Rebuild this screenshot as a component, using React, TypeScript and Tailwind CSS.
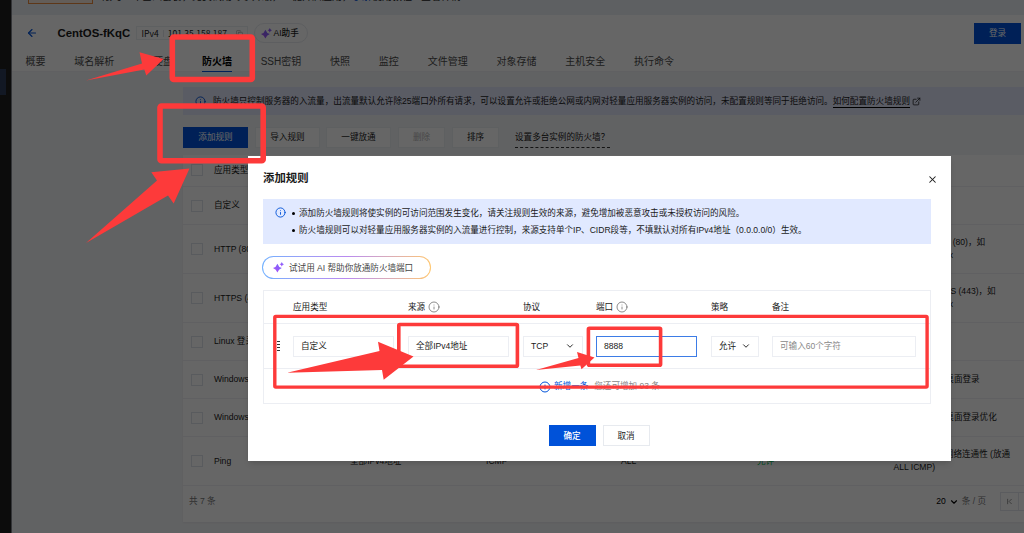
import { ArrowLeft, ChevronDown, ChevronFirst, Copy, ExternalLink, Info, PlusCircle, X } from 'lucide-react';

const TABS = [
  { label: '概要' },
  { label: '域名解析' },
  { label: '云硬盘' },
  { label: '防火墙', active: true },
  { label: 'SSH密钥' },
  { label: '快照' },
  { label: '监控' },
  { label: '文件管理' },
  { label: '对象存储' },
  { label: '主机安全' },
  { label: '执行命令' },
];

const RULES = [
  { type: '自定义', height: 'h-[38px]', remark: '' },
  { type: 'HTTP (80)', height: 'h-[49px]', remark: 'Web服务HTTP (80)\uff0c如 Apache、Nginx' },
  { type: 'HTTPS (443)', height: 'h-[49px]', remark: 'Web服务HTTPS (443)\uff0c如 Apache、Nginx' },
  { type: 'Linux 登录', height: 'h-[38px]', remark: '' },
  { type: 'Windows', height: 'h-[38px]', remark: 'Windows远程桌面登录' },
  { type: 'Windows', height: 'h-[38px]', remark: 'Windows远程桌面登录优化' },
  {
    type: 'Ping',
    height: 'h-[49px]',
    source: '全部IPv4地址',
    protocol: 'ICMP',
    port: 'ALL',
    policy: '允许',
    remark: '通过Ping测试网络连通性 (放通ALL ICMP)',
  },
];

const FIREWALL_NOTE =
  '防火墙只控制服务器的入流量\uff0c出流量默认允许除25端口外所有请求\uff0c可以设置允许或拒绝公网或内网对轻量应用服务器实例的访问\uff0c未配置规则等同于拒绝访问。';

const DIALOG_NOTES = [
  '添加防火墙规则将使实例的可访问范围发生变化\uff0c请关注规则生效的来源\uff0c避免增加被恶意攻击或未授权访问的风险。',
  '防火墙规则可以对轻量应用服务器实例的入流量进行控制\uff0c来源支持单个IP、CIDR段等\uff0c不填默认对所有IPv4地址\uff080.0.0.0/0\uff09生效。',
];

function Sparkle({ className }: { className?: string }) {
  return (
    <svg viewBox="0 0 20 20" className={className}>
      <defs>
        <linearGradient id="spark" x1="0" y1="1" x2="1" y2="0">
          <stop offset="0" stopColor="#b44cf5" />
          <stop offset="1" stopColor="#6f6bff" />
        </linearGradient>
      </defs>
      <path d="M8 3 Q10 9 16 11 Q10 13 8 19 Q6 13 0 11 Q6 9 8 3Z" fill="url(#spark)" />
      <path d="M16 0 Q16.9 3.1 20 4 Q16.9 4.9 16 8 Q15.1 4.9 12 4 Q15.1 3.1 16 0Z" fill="url(#spark)" />
    </svg>
  );
}

function Checkbox() {
  return <span className="ml-2 mr-[11px] h-3 w-3 shrink-0 border border-[#dfe3ea] bg-white" />;
}

function Header() {
  return (
    <header className="h-[57px] shrink-0 border-b border-[#eff1f5] bg-white">
      <div className="flex h-9 items-center pl-[14px] pr-[3px]">
        <ArrowLeft className="h-3 w-3 text-[#0052d9]" strokeWidth={2.2} />
        <h1 className="ml-[19.5px] w-[73px] text-[11.4px] font-bold whitespace-nowrap">CentOS-fKqC</h1>
        <div className="ml-[5px] flex h-[14px] w-[112px] items-center border border-[#eceff3] pl-[5px] font-['Noto_Sans_CJK_SC',sans-serif]">
          <span>IPv4</span>
          <span className="mx-1 h-[7px] w-px bg-[#e3e6ec]" />
          <span>101.35.158.187</span>
          <Copy className="ml-[9px] h-[7px] w-[7px] text-[#999]" />
        </div>
        <div className="ml-[6px] flex h-5 w-[54px] items-center rounded-full border border-[#e8ebf0] pl-[6px] font-medium whitespace-nowrap">
          <Sparkle className="mr-[2px] h-[11px] w-[11px]" />
          AI助手
        </div>
        <button className="ml-auto h-[21px] w-[47px] bg-[#0052d9] text-white">登录</button>
      </div>
      <nav className="flex h-5 gap-[28.8px] pl-[13.5px] text-[10px] text-[#4b4b4b]">
        {TABS.map((tab) => (
          <span
            key={tab.label}
            className={`h-[21px] whitespace-nowrap pt-px leading-[20px] ${tab.active ? 'border-b border-[#0052d9] font-bold text-black' : ''}`}
          >
            {tab.label}
          </span>
        ))}
      </nav>
    </header>
  );
}

function Console() {
  return (
    <div className="flex h-full w-full">
      <aside className="w-3 shrink-0 border-r border-[#80838a] bg-[#202020] pt-[69px]">
        <div className="h-[26px] w-[6px] bg-[#2d3c5a]" />
      </aside>
      <div className="flex min-w-0 flex-1 flex-col">
        <div className="flex h-[15px] shrink-0 items-start overflow-hidden bg-[#ebeff5]">
          <span className="ml-4 h-1 w-[65px] shrink-0 border border-t-0 border-[#e98a3c] bg-[#f7e9dc]" />
          <p className="-mt-[9px] ml-[9px] whitespace-nowrap text-[10px] leading-3">
            限时一年基础套餐{'\uff0c'}免费试用专享升级{'\uff0c'}一键开启应用{'\uff0c'}
            <span className="text-[#0052d9]">了解</span>使用教程 · 查看详情
          </p>
        </div>
        <Header />
        <main className="flex flex-1 flex-col overflow-hidden bg-[#f3f4f7] pl-[171px] pt-[15px]">
          <div className="flex h-7 shrink-0 items-center bg-[#e1e5fb] pl-3 pt-px tracking-[0.03px] whitespace-nowrap">
            <Info className="mr-[7px] h-[11px] w-[11px] text-[#0052d9]" />
            {FIREWALL_NOTE}
            <span className="border-b border-black leading-[11px]">如何配置防火墙规则</span>
            <ExternalLink className="ml-[2px] h-[9px] w-[9px]" />
          </div>
          <div className="mt-3 flex h-[21px] shrink-0 whitespace-nowrap">
            <button className="w-[65px] bg-[#0052d9] text-white">添加规则</button>
            <button className="ml-[7px] w-[65px] border border-[#eceff3] bg-white">导入规则</button>
            <button className="ml-[6px] w-[65px] border border-[#eceff3] bg-white">一键放通</button>
            <button className="ml-[7px] w-[47px] border border-[#eceff3] bg-white text-[#b5b5b5]">删除</button>
            <button className="ml-[7px] w-[47px] border border-[#eceff3] bg-white">排序</button>
            <span className="ml-[16px] w-[95px] border-b border-dashed border-[#333] leading-[21px]">
              设置多台实例的防火墙{'\uff1f'}
            </span>
          </div>
          <section className="mt-[7px] h-[367px] shrink-0 bg-white shadow-xs">
            <div className="flex h-8 items-center border-b border-[#eff1f5] pb-px">
              <Checkbox />
              应用类型
            </div>
            {RULES.map((rule, i) => (
              <div key={i} className={`flex items-center border-b border-[#eff1f5] ${rule.height}`}>
                <Checkbox />
                <span className="w-[136px] shrink-0">{rule.type}</span>
                <span className="w-[136px] shrink-0">{rule.source}</span>
                <span className="w-[135px] shrink-0">{rule.protocol}</span>
                <span className="w-[136px] shrink-0">{rule.port}</span>
                <span className="w-[136.5px] shrink-0 text-[#0abf5b]">{rule.policy}</span>
                <span className="w-[121px] leading-[13px]">{rule.remark}</span>
              </div>
            ))}
            <div className="flex h-[31px] items-center pl-[6px] text-[#777]">
              共 7 条
              <span className="ml-auto text-black">20</span>
              <ChevronDown className="mx-[3px] h-[10px] w-[10px] text-black" strokeWidth={2.6} />
              条 / 页
              <span className="ml-[14px] flex h-[19px] w-[19px] items-center justify-center border border-[#e3e7ee]">
                <ChevronFirst className="h-[9px] w-[9px]" />
              </span>
              <span className="h-[19px] w-[5px] border-y border-[#e3e7ee]" />
            </div>
          </section>
        </main>
      </div>
    </div>
  );
}

const FIELD = 'flex h-[21px] items-center border px-[7px] whitespace-nowrap';
const COLS = 'grid grid-cols-[115px_115px_73px_115px_61px_144px] pl-[29px]';

function RuleDialog() {
  return (
    <div className="absolute left-[248px] top-[156px] h-[305px] w-[703px] bg-white px-[15px] shadow-md">
      <div className="flex h-[43px] items-center justify-between">
        <h2 className="pt-px text-[11.4px] font-bold">添加规则</h2>
        <X className="mr-[-2px] mt-1 h-[11px] w-[11px]" strokeWidth={2.2} />
      </div>
      <div className="flex h-[45px] w-[668px] bg-[#e1e9ff] pl-3 pt-[6px]">
        <Info className="mt-[2px] h-[11px] w-[11px] text-[#0052d9]" />
        <ul className="ml-[6px] leading-[17.2px] whitespace-nowrap">
          {DIALOG_NOTES.map((note) => (
            <li key={note} className="flex items-center gap-1">
              <span className="h-[3px] w-[3px] rounded-full bg-black" />
              {note}
            </li>
          ))}
        </ul>
      </div>
      <div className="-ml-px mt-3 h-[23px] w-[169px] rounded-full bg-linear-to-r from-[#6fb0ff] via-[#b98af0] to-[#ffc56b] p-px">
        <div className="flex h-full items-center rounded-full bg-white pl-[10px] whitespace-nowrap text-[#444]">
          <Sparkle className="mr-[5px] h-[11px] w-[11px]" />
          <span className="pt-px">试试用 AI 帮助你放通防火墙端口</span>
        </div>
      </div>
      <div className="mt-[11px] h-[114px] w-[668px] border border-[#eceef3]">
        <div className={`${COLS} h-[33px] items-center border-b border-[#eceef3]`}>
          <span>应用类型</span>
          <span className="flex items-center gap-[3px]">
            来源 <Info className="h-[12px] w-[12px] text-[#666]" strokeWidth={1.5} />
          </span>
          <span>协议</span>
          <span className="flex items-center gap-[3px]">
            端口 <Info className="h-[12px] w-[12px] text-[#666]" strokeWidth={1.5} />
          </span>
          <span>策略</span>
          <span>备注</span>
        </div>
        <div className="relative">
          <span className="absolute left-[13px] top-[17px] h-[10px] w-[3px] bg-[repeating-linear-gradient(#333_0_1px,transparent_1px_3px)]" />
          <div className={`${COLS} h-[45px] items-center border-b border-[#eceef3]`}>
            <div className={`${FIELD} w-[101px] border-[#eceef3]`}>自定义</div>
            <div className={`${FIELD} w-[101px] border-[#eceef3]`}>全部IPv4地址</div>
            <div className={`${FIELD} w-[60px] justify-between border-[#eceef3]`}>
              TCP
              <ChevronDown className="h-[10px] w-[10px]" strokeWidth={2.2} />
            </div>
            <div className={`${FIELD} w-[101px] border-[#3d7ce6]`}>8888</div>
            <div className={`${FIELD} w-[48px] justify-between border-[#eceef3]`}>
              允许
              <ChevronDown className="h-[10px] w-[10px] shrink-0" strokeWidth={2.2} />
            </div>
            <div className={`${FIELD} w-[144px] border-[#eceef3] text-[#888]`}>可输入60个字符</div>
          </div>
        </div>
        <div className="flex h-[35px] items-center pl-[275px] text-[#888]">
          <PlusCircle className="mr-[3px] h-[12px] w-[12px] text-[#0052d9]" />
          <span className="mr-[6px] text-[#0052d9]">新增一条</span>
          您还可增加 93 条
        </div>
      </div>
      <div className="mt-[21px] flex justify-center gap-[7px] pr-px">
        <button className="h-[21px] w-[47px] bg-[#0052d9] pt-px font-medium text-white">确定</button>
        <button className="h-[21px] w-[47px] border border-[#e7eaef] pt-px">取消</button>
      </div>
    </div>
  );
}

// Red step markers drawn over the whole console
function Annotations() {
  return (
    <svg viewBox="0 0 1024 533" className="pointer-events-none absolute inset-0 h-full w-full">
      <g fill="none" stroke="#fd3a3a" strokeLinejoin="round">
        <rect x="172.3" y="37" width="80" height="42.5" rx="1.5" strokeWidth="5.6" />
        <rect x="160" y="106" width="103.2" height="54.8" rx="1.5" strokeWidth="5.6" />
        <rect x="274.8" y="316.4" width="652.3" height="70.7" rx="1" strokeWidth="3.4" />
        <rect x="398.8" y="324.5" width="118.6" height="41.8" rx="1" strokeWidth="3.6" />
        <rect x="588.4" y="328.3" width="72.2" height="37" rx="1" strokeWidth="3.6" />
      </g>
      <g fill="#fd3a3a">
        <path d="M86 80.5 142 63.5 139.5 52.3 163.5 59 146.3 75.5 144.3 69.5Z" />
        <path d="M86 243 157 180.5 151.3 172.3 189.5 168.5 173.7 203.5 168 195.5Z" />
        <path d="M287 372.7 379.5 351 378 341.7 413.5 356.5 383.7 379.7 382 370Z" />
        <path d="M536 370 578.5 358 577 352 594.5 357.5 581.5 369.3 580.3 365.5Z" />
      </g>
    </svg>
  );
}

export default function App() {
  return (
    <div className="relative h-[533px] w-[1024px] overflow-hidden bg-white font-['Liberation_Sans','Noto_Sans_CJK_SC',sans-serif] text-[8.57px] leading-[13px] text-[#1a1a1a]">
      <Console />
      <div className="absolute inset-0 bg-black/60" />
      <RuleDialog />
      <Annotations />
    </div>
  );
}
